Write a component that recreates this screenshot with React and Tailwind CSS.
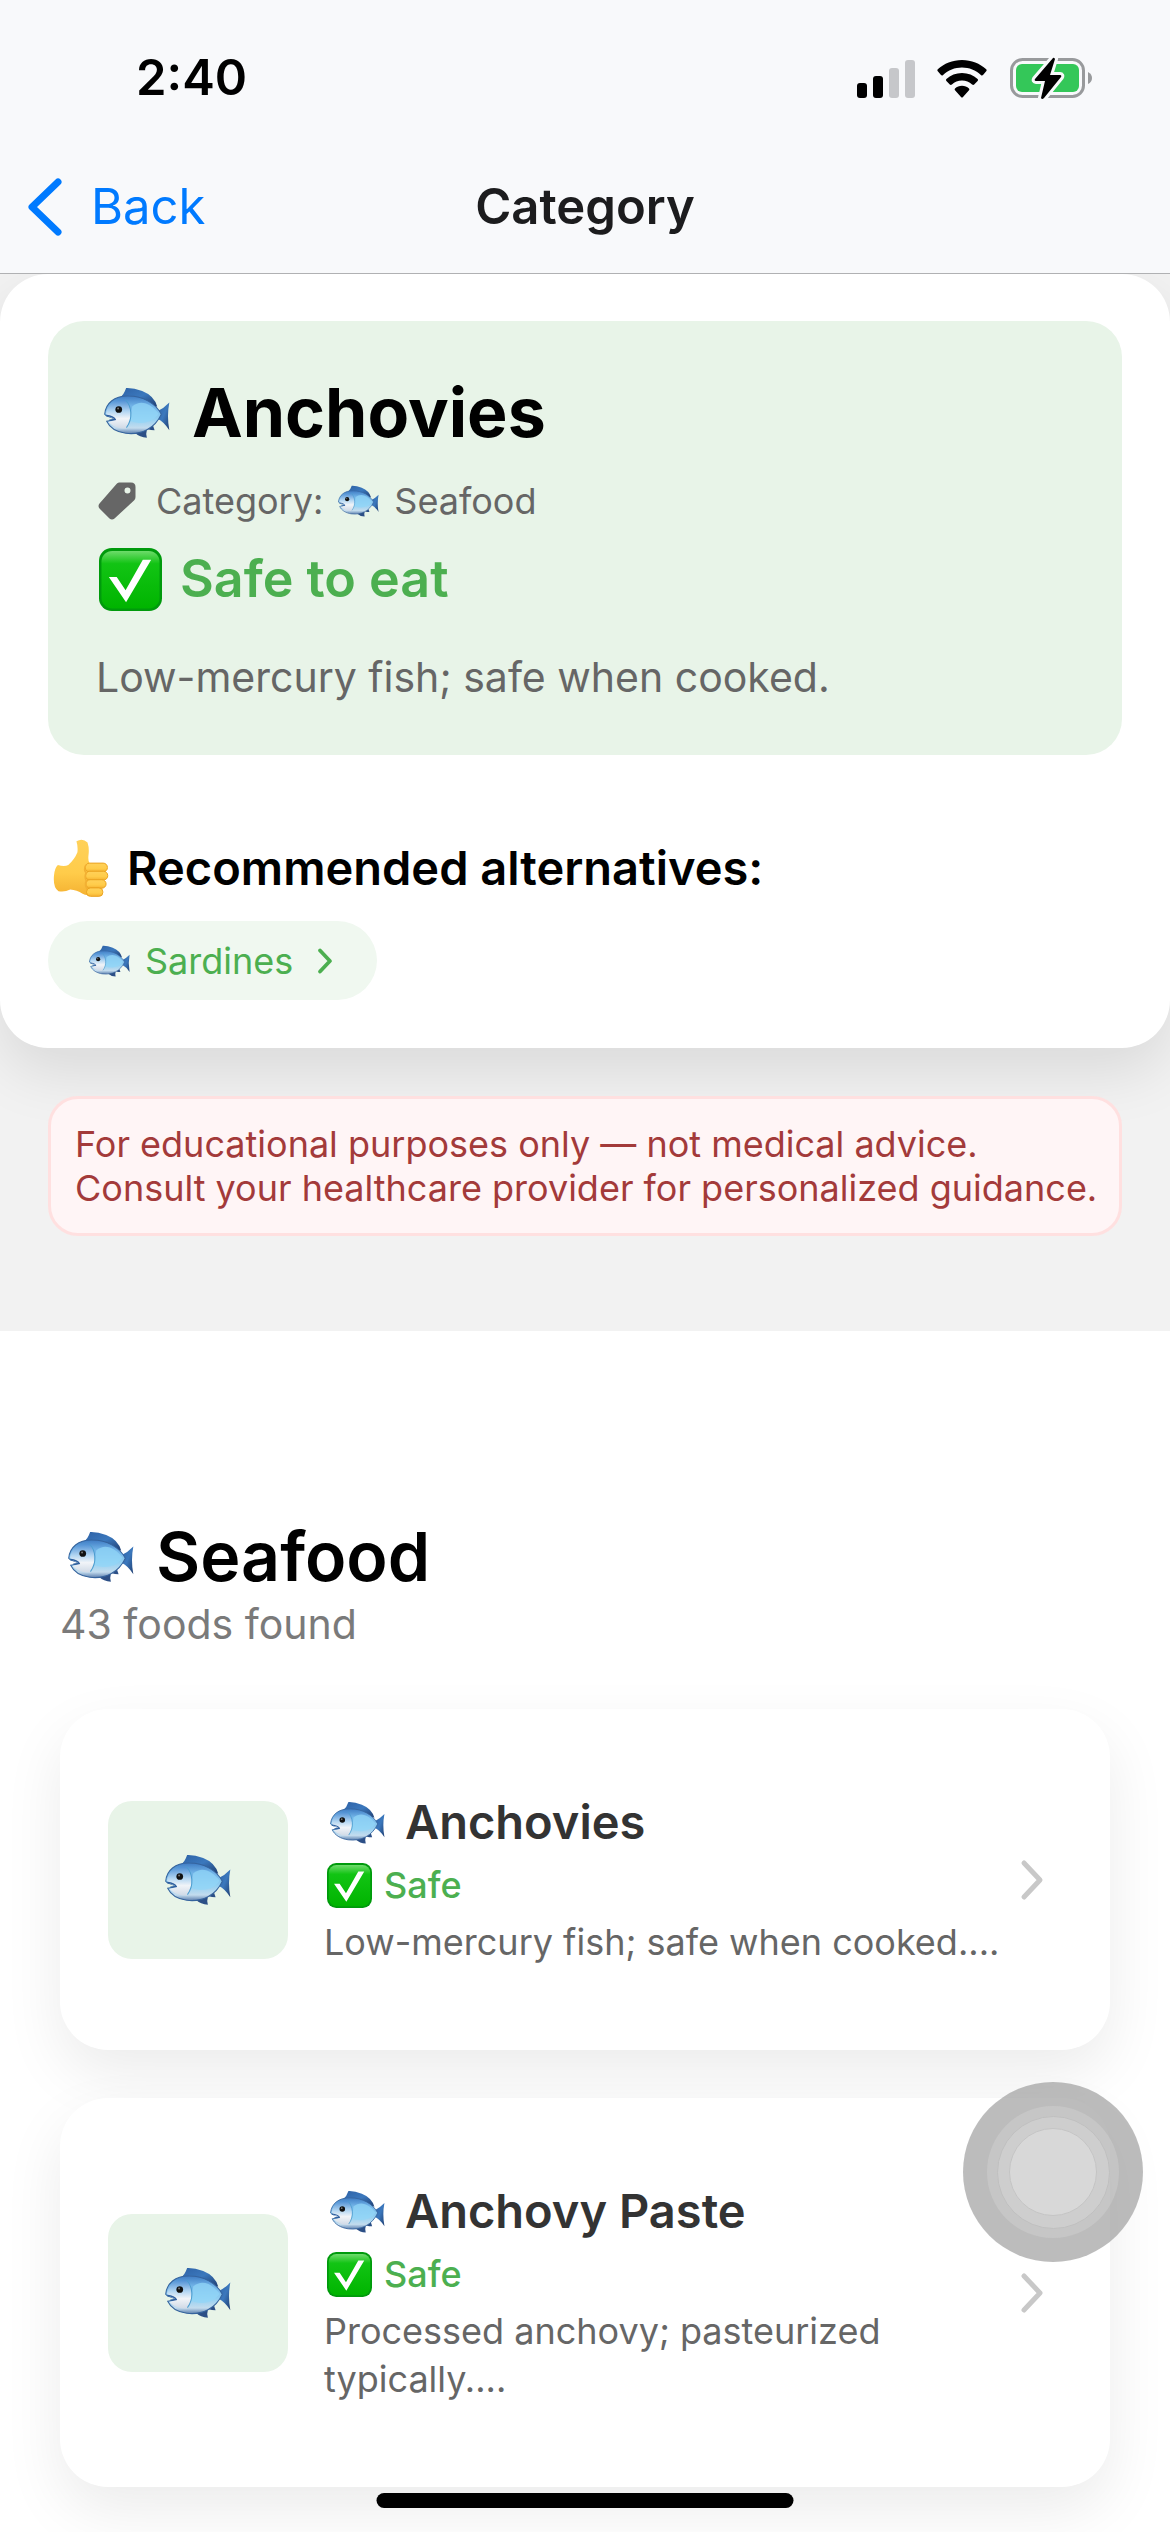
import React, { useId } from 'react';

const foods = [
  {
    name: 'Anchovies',
    status: 'Safe',
    note: 'Low-mercury fish; safe when cooked....',
  },
  {
    name: 'Anchovy Paste',
    status: 'Safe',
    note: 'Processed anchovy; pasteurized typically....',
  },
];

const Fish = ({ className }) => {
  const id = useId();
  return (
    <svg viewBox="40 34 197 152" className={className} role="img" aria-label="fish">
      <defs>
        <linearGradient id={id + 'body'} x1="0" y1="0" x2="0" y2="1">
          <stop offset="0" stopColor="#3f7cc4" />
          <stop offset="0.25" stopColor="#6fb1e6" />
          <stop offset="0.6" stopColor="#93d0f2" />
          <stop offset="0.85" stopColor="#c3dcee" />
          <stop offset="1" stopColor="#5d7fae" />
        </linearGradient>
        <linearGradient id={id + 'fin'} x1="0" y1="0" x2="1" y2="1">
          <stop offset="0" stopColor="#2e62a6" />
          <stop offset="0.5" stopColor="#3b78bd" />
          <stop offset="1" stopColor="#1f3d70" />
        </linearGradient>
        <linearGradient id={id + 'head'} x1="0" y1="0" x2="0" y2="1">
          <stop offset="0" stopColor="#4f8fd4" />
          <stop offset="0.4" stopColor="#b3d6f2" />
          <stop offset="0.65" stopColor="#f1f4f8" />
          <stop offset="1" stopColor="#cfd9e6" />
        </linearGradient>
      </defs>
      <path d="M88 65 Q100 56 106 37 Q128 36 154 46 Q190 60 199 93 Z" fill={`url(#${id}fin)`} />
      <path d="M199 106 Q218 98 235 80 Q227 120 235 163 Q219 138 199 128 Z" fill={`url(#${id}fin)`} />
      <path d="M131 170 L168 162 Q164 174 168 185 Q147 185 131 170 Z" fill="#2c4f86" />
      <path d="M170 160 L186 148 L191 163 Q180 163 170 160 Z" fill="#2c4f86" />
      <path
        d="M42 115 C45 83 70 60 113 61 C157 61 194 83 211 115 C192 157 151 178 105 172 C77 168 57 155 48 136 Q60 134 74 132 Q67 126 55 123 Q46 121 42 115 Z"
        fill={`url(#${id}body)`}
        stroke="#35639d"
        strokeWidth="3"
      />
      <path d="M124 92 C150 70 180 83 203 114 C184 142 151 147 120 135 Z" fill="#91d6f7" opacity="0.75" />
      <path
        d="M46 113 C50 87 70 71 104 73 C122 91 126 128 106 158 C82 158 63 149 53 138 Q64 136 74 132 Q67 126 55 123 Z"
        fill={`url(#${id}head)`}
      />
      <path d="M104 72 C123 92 127 128 107 155" fill="none" stroke="#4c9dcf" strokeWidth="3" />
      <path d="M47 119 Q68 121 74 131 L56 133" fill="none" stroke="#2e5f9f" strokeWidth="4" strokeLinejoin="round" />
      <circle cx="84" cy="101" r="10" fill="#111" />
      <circle cx="82" cy="98" r="3" fill="#777" />
    </svg>
  );
};

const Check = ({ className }) => {
  const id = useId();
  return (
    <svg viewBox="0 0 64 64" className={className} role="img" aria-label="yes">
      <defs>
        <linearGradient id={id} x1="0" y1="0" x2="0" y2="1">
          <stop offset="0" stopColor="#6edb6b" />
          <stop offset="0.22" stopColor="#12c414" />
          <stop offset="1" stopColor="#00b400" />
        </linearGradient>
      </defs>
      <rect width="64" height="64" rx="13" fill="#009a0c" />
      <rect x="2.5" y="3" width="59" height="58.5" rx="11" fill={`url(#${id})`} />
      <path d="M10 29.5 H18 L27 43 L44.500 12 H53 L27.500 55 Z" fill="#fff" />
    </svg>
  );
};

const ThumbsUp = ({ className }) => {
  const id = useId();
  return (
    <svg viewBox="38 55 170 178" className={className} role="img" aria-label="thumbs up">
      <defs>
        <linearGradient id={id} x1="0" y1="0" x2="0" y2="1">
          <stop offset="0" stopColor="#ffd15a" />
          <stop offset="0.6" stopColor="#ffcc4a" />
          <stop offset="1" stopColor="#f5b232" />
        </linearGradient>
      </defs>
      <path
        d="M109 62 Q128 51 143 66 Q149 84 146 105 Q144 121 149 128 L160 220 Q145 232 128 223 Q110 211 90 210 Q72 219 54 215 Q37 206 40 168 Q42 144 52 135 Q72 141 84 135 Q104 117 112 96 Q114 78 109 62 Z"
        fill={`url(#${id})`}
      />
      <g fill={`url(#${id})`} stroke="#e9a21f" strokeWidth="3">
        <rect x="136" y="129" width="68" height="27" rx="13" />
        <rect x="137" y="154" width="68" height="27" rx="13" />
        <rect x="138" y="180" width="62" height="26" rx="13" />
        <rect x="140" y="205" width="50" height="26" rx="12" />
      </g>
      <path d="M138 134 Q130 150 139 158 Q133 172 139 183 Q134 196 141 208" fill="none" stroke="#f2b033" strokeWidth="5" />
    </svg>
  );
};

const Chevron = ({ className, strokeWidth = 5 }) => (
  <svg viewBox="0 0 24 42" className={className} fill="none" stroke="currentColor" strokeWidth={strokeWidth} strokeLinecap="round" strokeLinejoin="round" aria-hidden="true">
    <path d="M4 4 L20 21 L4 38" />
  </svg>
);

const StatusBar = () => (
  <div className="flex h-[141px] items-center justify-between pt-[15px] pr-[77px] pl-[136px]">
    <span className="text-[49px] leading-[60px] font-semibold text-black">2:40</span>
    <div className="flex items-center">
      <svg viewBox="0 0 58 42" className="mr-[22px] h-[42px] w-[58px]" aria-hidden="true">
        <rect x="0" y="26" width="10" height="15" rx="3" />
        <rect x="16" y="19" width="10" height="22" rx="3" />
        <rect x="32" y="11" width="10" height="30" rx="3" fill="#c6c7ca" />
        <rect x="48" y="3" width="10" height="38" rx="3" fill="#c6c7ca" />
      </svg>
      <svg viewBox="0 0 50 42" className="mr-[23px] h-[42px] w-[50px]" aria-hidden="true">
        <path d="M25 3 C15.500 3 7 6.500 .8 12.300 Q-.1 13.200 .8 14.300 L4 18 Q5 18.900 6.100 17.900 C11.200 13.200 17.800 10.500 25 10.500 S38.800 13.200 43.900 17.900 Q45 18.900 46 18 L49.200 14.300 Q50.100 13.200 49.200 12.300 C43 6.500 34.500 3 25 3 Z" />
        <path d="M25 16 C19 16 13.500 18.200 9.400 21.900 Q8.400 22.900 9.400 23.900 L12.800 27.600 Q13.800 28.400 14.900 27.500 C17.600 25 21.100 23.600 25 23.600 S32.400 25 35.100 27.500 Q36.200 28.400 37.200 27.600 L40.600 23.900 Q41.600 22.900 40.600 21.900 C36.500 18.200 31 16 25 16 Z" />
        <path d="M25 28.800 C22.300 28.800 19.900 29.800 18 31.400 Q17.200 32.300 18 33.200 L24 40 Q25 41 26 40 L32 33.200 Q32.800 32.300 32 31.400 C30.100 29.800 27.700 28.800 25 28.800 Z" />
      </svg>
      <svg viewBox="0 0 83 42" className="h-[42px] w-[83px]" aria-hidden="true">
        <rect x="1.500" y="2.500" width="72" height="37" rx="11" fill="none" stroke="#989a9c" strokeWidth="3" />
        <path d="M78 15 Q82 17 82 21 Q82 25 78 27 Z" fill="#989a9c" />
        <rect x="6" y="7" width="63" height="28" rx="6" fill="#34c759" />
        <path d="M43 1 L25 22 Q24 24 26 24 H35 L31 41 Q32 43 34 41 L51 20 Q52 18 50 18 H40 L45 2 Q44 0 43 1 Z" stroke="#f8f9fb" strokeWidth="6" />
        <path d="M43 1 L25 22 Q24 24 26 24 H35 L31 41 Q32 43 34 41 L51 20 Q52 18 50 18 H40 L45 2 Q44 0 43 1 Z" />
      </svg>
    </div>
  </div>
);

const NavBar = () => (
  <nav className="grid h-[133px] grid-cols-3 items-center border-b border-[#b0b1b3]">
    <a href="#" className="flex items-center pl-[27px] text-[49px] leading-[60px] text-[#007aff]">
      <svg viewBox="0 0 36 58" className="mr-7 h-[58px] w-9" fill="none" stroke="currentColor" strokeWidth="7" strokeLinecap="round" strokeLinejoin="round" aria-hidden="true">
        <path d="M31 4 L5 29 L31 54" />
      </svg>
      Back
    </a>
    <h1 className="text-center text-[49px] leading-[60px] font-semibold text-[#1c1c1e]">Category</h1>
  </nav>
);

const FoodCard = ({ food }) => (
  <a
    href="#"
    className="flex items-center rounded-[48px] bg-white px-12 py-[84px] shadow-[0_24px_60px_rgba(0,0,0,0.08)]"
  >
    <div className="flex h-[158px] w-[180px] shrink-0 items-center justify-center rounded-3xl bg-[#e8f4e8]">
      <Fish className="h-[51px] w-[66px]" />
    </div>
    <div className="ml-9 min-w-0 flex-1">
      <h3 className="flex items-center text-[47px] leading-[58px] font-semibold text-[#333]">
        <Fish className="mr-5 ml-1.5 h-[43px] w-[55px]" />
        {food.name}
      </h3>
      <p className="mt-2.5 flex items-center text-4xl leading-[48px] font-medium text-[#4caf50]">
        <Check className="mr-3 ml-[3px] size-[45px]" />
        {food.status}
      </p>
      <p className="mt-[9px] text-4xl leading-[48px] text-[#666]">{food.note}</p>
    </div>
    <div className="flex w-[60px] shrink-0 justify-center text-[#c8c8c8]">
      <Chevron className="h-[42px] w-6" />
    </div>
  </a>
);

const App = () => {
  return (
    <div className="relative min-h-screen overflow-hidden bg-white font-['Inter',sans-serif]">
      <header className="relative z-10 bg-[#f8f9fb]">
        <StatusBar />
        <NavBar />
      </header>

      <section className="bg-[#f2f2f2] pb-[95px]">
        <div className="rounded-[48px] bg-white px-12 pt-[47px] pb-12 shadow-[0_24px_60px_rgba(0,0,0,0.1)]">
          <div className="rounded-[36px] bg-[#e8f4e8] p-12">
            <h2 className="flex items-center text-[68px] leading-[86px] font-bold text-black">
              <Fish className="mr-[22px] ml-2 h-[51px] w-[66px]" />
              Anchovies
            </h2>
            <p className="mt-6 flex items-center text-4xl leading-[44px] text-[#666]">
              <svg viewBox="0 0 38 38" className="mr-5 ml-0.5 size-[38px]" fill="currentColor" aria-hidden="true">
                <path
                  fillRule="evenodd"
                  d="M21 0.500 H33 Q37.500 0.500 37.500 5 V15 Q37.500 17 36 18.500 L16.500 36.500 Q14 38.500 11.500 36.500 L1.500 26.500 Q-.5 24 1.500 21.500 L18.500 2 Q19.500 .5 21 .5 Z M29.500 5.500 A3 3 0 1 0 29.500 11.500 A3 3 0 1 0 29.500 5.500 Z"
                />
              </svg>
              Category:
              <Fish className="mx-[15px] h-8 w-[41px]" />
              Seafood
            </p>
            <p className="mt-6 flex items-center text-[52px] leading-[64px] font-semibold text-[#4caf50]">
              <Check className="mr-[18px] ml-[3px] size-[63px]" />
              Safe to eat
            </p>
            <p className="mt-9 text-[41px] leading-[60px] text-[#666]">Low-mercury fish; safe when cooked.</p>
          </div>

          <h3 className="mt-[84px] flex items-center text-[47px] leading-[58px] font-semibold text-black">
            <ThumbsUp className="mr-[18px] ml-[5px] h-[58px] w-14" />
            Recommended alternatives:
          </h3>
          <button type="button" className="mt-6 flex h-[79px] items-center rounded-full bg-[#f0f8f0] pr-11 pl-[41px] text-4xl leading-[44px] text-[#4caf50]">
            <Fish className="mr-[15px] h-8 w-[41px]" />
            Sardines
            <Chevron className="ml-6 h-[26px] w-4" strokeWidth={6} />
          </button>
        </div>

        <p className="mx-12 mt-12 rounded-[30px] border-3 border-[#ffe0e0] bg-[#fff5f6] py-[23px] pr-3 pl-6 text-4xl leading-[44px] text-[#a33a3a]">
          For educational purposes only — not medical advice.
          <br />
          Consult your healthcare provider for personalized guidance.
        </p>
      </section>

      <main className="px-[60px] pt-[182px] pb-[45px]">
        <h2 className="flex items-center text-[68px] leading-[86px] font-semibold text-black">
          <Fish className="mr-[22px] ml-2 h-[51px] w-[66px]" />
          Seafood
        </h2>
        <p className="text-[41px] leading-[50px] text-[#7a7a7a]">43 foods found</p>
        <div className="mt-15 flex flex-col gap-12">
          {foods.map((food) => (
            <FoodCard key={food.name} food={food} />
          ))}
        </div>
      </main>

      {/* floating touch button */}
      <button
        type="button"
        aria-label="Open touch menu"
        className="fixed right-[27px] bottom-[270px] flex size-[180px] items-center justify-center rounded-full bg-[#989898]/65"
      >
        <span className="flex size-[132px] items-center justify-center rounded-full bg-white/15">
          <span className="flex size-[113px] items-center justify-center rounded-full border border-[#bfbfbf] bg-white/15">
            <span className="size-[88px] rounded-full border border-[#c4c4c4] bg-[#d8d8d8]" />
          </span>
        </span>
      </button>

      <div className="fixed bottom-6 left-1/2 h-[15px] w-[417px] -translate-x-1/2 rounded-full bg-black" />
    </div>
  );
};

export default App;
